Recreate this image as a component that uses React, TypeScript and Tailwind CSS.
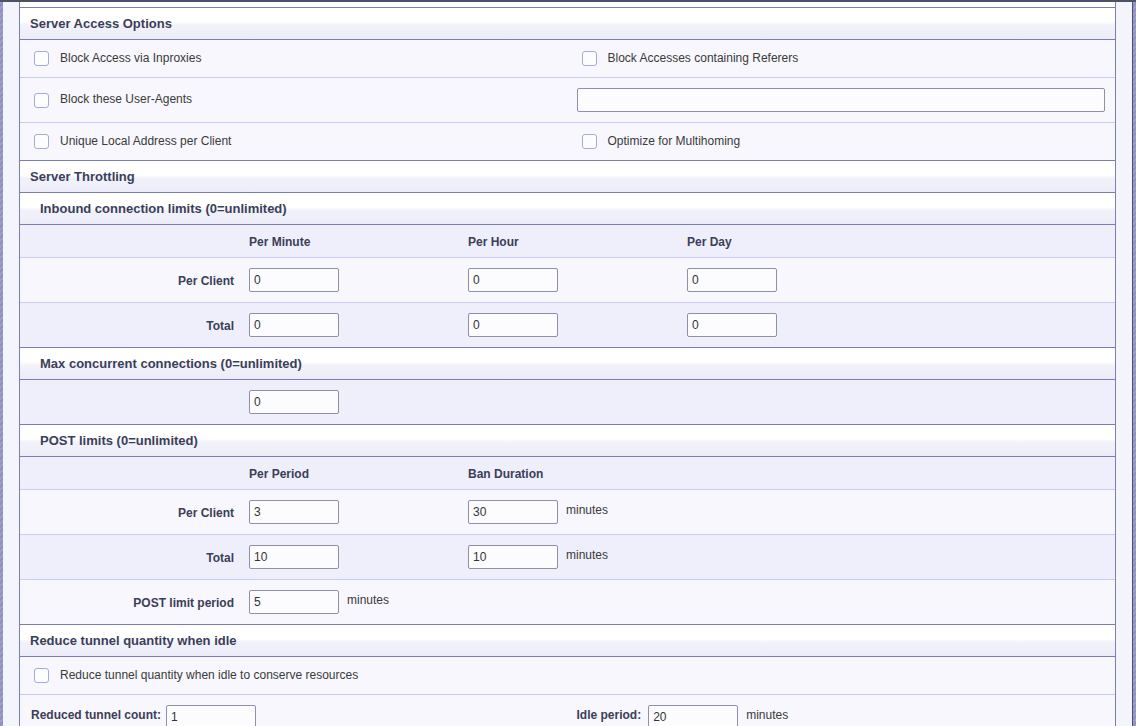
import React from "react";

const FONT = { fontFamily: '"Liberation Sans", Arial, sans-serif' };

const headBg =
  "bg-[linear-gradient(to_bottom,#ffffff_0%,#ffffff_45%,#f2f2fb_55%,#ececf8_100%)]";

function SectionHead({ title, indent = false }: { title: string; indent?: boolean }) {
  return (
    <div
      className={`flex h-[32px] items-center border-b border-[#7d7bc0] ${headBg} ${
        indent ? "pl-[20px]" : "pl-[10px]"
      } text-[13px] font-bold text-[#3b3e58]`}
    >
      <span className="mt-[1px]">{title}</span>
    </div>
  );
}

function Check({ label }: { label: string }) {
  return (
    <label className="flex items-center gap-[11px] pl-[14px] text-[12px] text-[#3a3a3a]">
      <span className="h-[15px] w-[15px] rounded-[3px] border border-[#a3aae0] bg-[#fdfdff]" />
      <span className="-mt-[2px]">{label}</span>
    </label>
  );
}

function Field({ value, wide = false }: { value: string; wide?: boolean }) {
  return (
    <input
      readOnly
      value={value}
      className={`h-[24px] ${
        wide ? "w-full" : "w-[90px]"
      } rounded-[2px] border border-[#8f8fa6] bg-[#fcfcff] px-[4px] text-[12px] text-[#333] outline-none`}
      style={FONT}
    />
  );
}

function Minutes() {
  return <span className="-mt-[4px] ml-[8px] text-[12px] text-[#3a3a3a]">minutes</span>;
}

function GridRow({
  label,
  cells,
  alt,
  header = false,
  last = false,
}: {
  label?: string;
  cells: React.ReactNode[];
  alt: boolean;
  header?: boolean;
  last?: boolean;
}) {
  return (
    <div
      className={`grid grid-cols-[221px_219px_219px_1fr] ${
        header ? "h-[33px]" : "h-[45px]"
      } ${alt ? "bg-[#efeffb]" : "bg-[#f7f7fd]"} border-b ${
        last ? "border-[#7d7bc0]" : "border-[#c8cdf1]"
      }`}
    >
      <div className="flex items-center justify-end pr-[7px] text-[12px] font-bold text-[#3b3e58]">
        <span className="mt-[1px]">{label}</span>
      </div>
      {cells.map((c, i) => (
        <div
          key={i}
          className={`flex items-center pl-[8px] ${
            header ? "pt-[1px] text-[12px] font-bold text-[#3b3e58]" : ""
          }`}
        >
          {c}
        </div>
      ))}
    </div>
  );
}

export default function App() {
  return (
    <div className="flex h-[726px] w-[1136px] flex-col overflow-hidden bg-[#f4f4fb]" style={FONT}>
      <div className="h-[2px] shrink-0 bg-[#4d5366]" />
      <div className="flex min-h-0 flex-1">
        <div className="w-[3px] shrink-0 bg-[repeating-linear-gradient(135deg,#9d9dcd_0px,#9d9dcd_2px,#8f8fc3_2px,#8f8fc3_4px)]" />
        <div className="w-[16px] shrink-0 bg-[#f4f4fb]" />
        <div className="w-[1097px] shrink-0 border-x border-[#7d7bc0] bg-[#f7f7fd]">
          <div className="h-[6px] border-b border-[#7d7bc0] bg-white" />

          <SectionHead title="Server Access Options" />
          <div className="grid h-[38px] grid-cols-2 border-b border-[#c8cdf1]">
            <Check label="Block Access via Inproxies" />
            <Check label="Block Accesses containing Referers" />
          </div>
          <div className="grid h-[45px] grid-cols-2 border-b border-[#c8cdf1]">
            <Check label="Block these User-Agents" />
            <div className="flex items-center pl-[9px] pr-[10px]">
              <Field value="" wide />
            </div>
          </div>
          <div className="grid h-[38px] grid-cols-2 border-b border-[#7d7bc0]">
            <Check label="Unique Local Address per Client" />
            <Check label="Optimize for Multihoming" />
          </div>

          <SectionHead title="Server Throttling" />
          <SectionHead title="Inbound connection limits (0=unlimited)" indent />
          <GridRow alt header cells={["Per Minute", "Per Hour", "Per Day"]} />
          <GridRow
            alt={false}
            label="Per Client"
            cells={[<Field value="0" />, <Field value="0" />, <Field value="0" />]}
          />
          <GridRow
            alt
            last
            label="Total"
            cells={[<Field value="0" />, <Field value="0" />, <Field value="0" />]}
          />

          <SectionHead title="Max concurrent connections (0=unlimited)" indent />
          <GridRow alt last cells={[<Field value="0" />]} />

          <SectionHead title="POST limits (0=unlimited)" indent />
          <GridRow alt header cells={["Per Period", "Ban Duration"]} />
          <GridRow
            alt={false}
            label="Per Client"
            cells={[
              <Field value="3" />,
              <>
                <Field value="30" />
                <Minutes />
              </>,
            ]}
          />
          <GridRow
            alt
            label="Total"
            cells={[
              <Field value="10" />,
              <>
                <Field value="10" />
                <Minutes />
              </>,
            ]}
          />
          <GridRow
            alt={false}
            last
            label="POST limit period"
            cells={[
              <>
                <Field value="5" />
                <Minutes />
              </>,
            ]}
          />

          <SectionHead title="Reduce tunnel quantity when idle" />
          <div className="flex h-[38px] items-center border-b border-[#c8cdf1]">
            <Check label="Reduce tunnel quantity when idle to conserve resources" />
          </div>
          <div className="grid h-[44px] grid-cols-2">
            <div className="flex items-center pl-[11px]">
              <span className="-mt-[4px] mr-[5px] text-[12px] font-bold text-[#3b3e58]">
                Reduced tunnel count:
              </span>
              <Field value="1" />
            </div>
            <div className="flex items-center pl-[9px]">
              <span className="-mt-[4px] mr-[7px] text-[12px] font-bold text-[#3b3e58]">
                Idle period:
              </span>
              <Field value="20" />
              <Minutes />
            </div>
          </div>
        </div>
        <div className="w-[16px] shrink-0 bg-[#f4f4fb]" />
        <div className="w-[1px] shrink-0 bg-[#4d5366]" />
        <div className="w-[3px] shrink-0 bg-[repeating-linear-gradient(135deg,#9d9dcd_0px,#9d9dcd_2px,#8f8fc3_2px,#8f8fc3_4px)]" />
      </div>
    </div>
  );
}
